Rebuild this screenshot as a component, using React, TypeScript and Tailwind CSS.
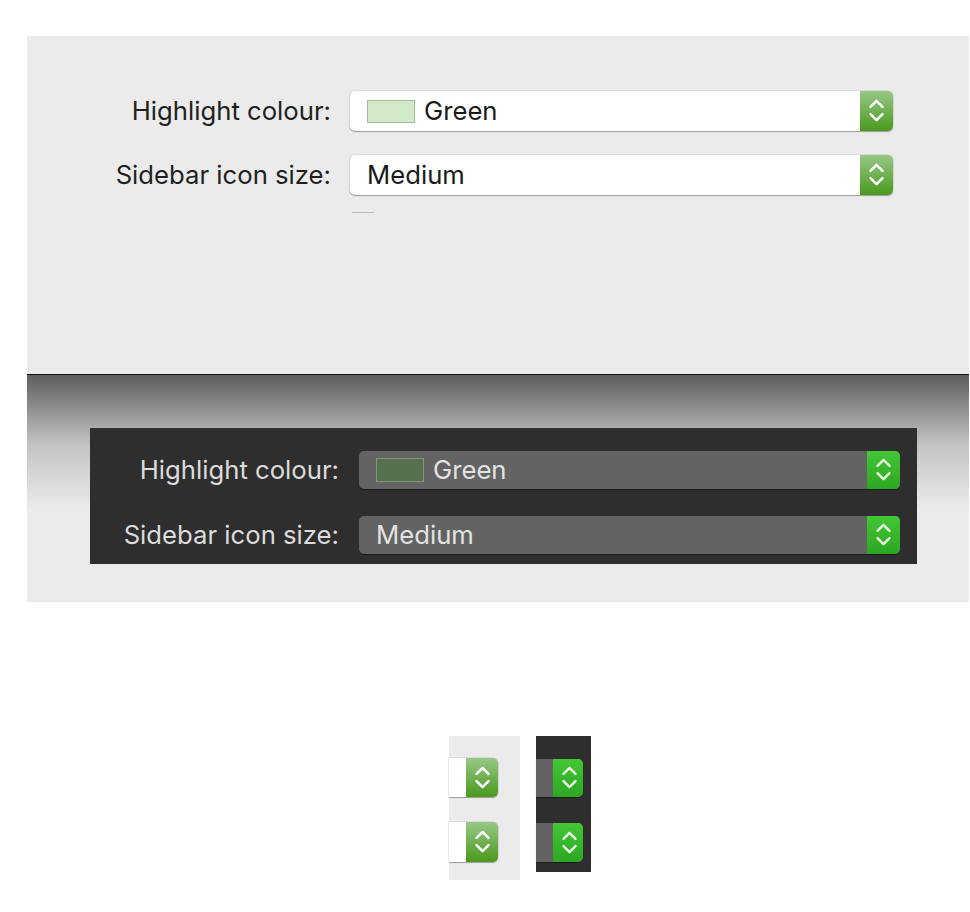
import React from "react";

type PopupProps = {
  dark?: boolean;
  width: number;
  height: number;
  clipped?: boolean;
  children?: React.ReactNode;
};

function Chevrons({ dark }: { dark?: boolean }) {
  return (
    <svg width="33" height="40" viewBox="0 0 33 40" className="block">
      <g
        fill="none"
        stroke={dark ? "#e4f3e0" : "#ffffff"}
        strokeWidth={2.5}
        strokeLinecap="round"
        strokeLinejoin="round"
      >
        <path d="M10.5 15.8 L16.5 9.8 L22.5 15.8" />
        <path d="M10.5 23.2 L16.5 29.2 L22.5 23.2" />
      </g>
    </svg>
  );
}

function Popup({ dark, width, height, clipped, children }: PopupProps) {
  return (
    <div
      className={
        "flex items-stretch overflow-hidden " +
        (clipped ? "rounded-r-[5px] " : "rounded-[5px] ") +
        (dark
          ? "bg-[#636363] shadow-[0_1px_1px_rgba(0,0,0,0.45)]"
          : "bg-white shadow-[0_1px_1px_rgba(0,0,0,0.28),0_0_0_0.5px_rgba(0,0,0,0.14)]")
      }
      style={{ width, height }}
    >
      <div className="flex-1 flex items-center pl-[17px] min-w-0">{children}</div>
      <div
        className={
          "w-[33px] shrink-0 flex items-center justify-center " +
          (dark
            ? "bg-[linear-gradient(to_bottom,#41c735,#2ea623)]"
            : "bg-[linear-gradient(to_bottom,#97c786,#4a991c)]")
        }
      >
        <Chevrons dark={dark} />
      </div>
    </div>
  );
}

const font = { fontFamily: "Inter, 'Liberation Sans', sans-serif" };

export default function App() {
  return (
    <div className="min-h-[912px] bg-white pt-[36px]" style={font}>
      <div className="ml-[27px] w-[942px] bg-[#ebebeb]">
        {/* Light theme */}
        <div className="h-[338px] pt-[55px]">
          <div className="flex flex-col gap-[24px]">
            <div className="flex items-center">
              <div className="w-[304px] text-right text-[25.7px] text-[#1f1f1f]">Highlight colour:</div>
              <div className="ml-[19px]">
                <Popup width={543} height={40}>
                  <span className="w-[48px] h-[23px] bg-[#d2e9c8] border border-[#a2bd98] mr-[9px]" />
                  <span className="text-[25.7px] text-[#1a1a1a]">Green</span>
                </Popup>
              </div>
            </div>
            <div className="flex items-center">
              <div className="w-[304px] text-right text-[25.7px] text-[#1f1f1f]">Sidebar icon size:</div>
              <div className="ml-[19px]">
                <Popup width={543} height={40}>
                  <span className="text-[25.7px] text-[#1a1a1a]">Medium</span>
                </Popup>
              </div>
            </div>
          </div>
          <div className="ml-[325px] mt-[17px] w-[22px] h-px bg-[#bdbdbd]" />
        </div>

        <div className="h-px bg-[#111]" />

        {/* Dark theme */}
        <div className="h-[227px] pt-[53px] pl-[63px] bg-[linear-gradient(to_bottom,#5e5e5e,#c4c4c4_70px,#ebebeb_135px)]">
          <div className="w-[827px] h-[136px] bg-[#2e2e2e] pt-[23px] flex flex-col gap-[26px]">
            <div className="flex items-center">
              <div className="w-[249px] text-right text-[25.7px] text-[#dcdcdc]">Highlight colour:</div>
              <div className="ml-[20px]">
                <Popup dark width={541} height={38}>
                  <span className="w-[48px] h-[24px] bg-[#56704f] border border-[#7e9a77] mr-[9px]" />
                  <span className="text-[25.7px] text-[#e2e2e2]">Green</span>
                </Popup>
              </div>
            </div>
            <div className="flex items-center">
              <div className="w-[249px] text-right text-[25.7px] text-[#dcdcdc]">Sidebar icon size:</div>
              <div className="ml-[20px]">
                <Popup dark width={541} height={38}>
                  <span className="text-[25.7px] text-[#e2e2e2]">Medium</span>
                </Popup>
              </div>
            </div>
          </div>
        </div>
      </div>

      {/* Close-up of the steppers */}
      <div className="mt-[134px] pl-[449px] flex gap-[16px] items-start">
        <div className="w-[71px] h-[144px] bg-[#ebebeb] pt-[22px] flex flex-col gap-[25px]">
          <Popup clipped width={49} height={39} />
          <Popup clipped width={49} height={40} />
        </div>
        <div className="w-[55px] h-[136px] bg-[#2e2e2e] pt-[23px] flex flex-col gap-[26px]">
          <Popup dark clipped width={47} height={38} />
          <Popup dark clipped width={47} height={39} />
        </div>
      </div>
    </div>
  );
}
